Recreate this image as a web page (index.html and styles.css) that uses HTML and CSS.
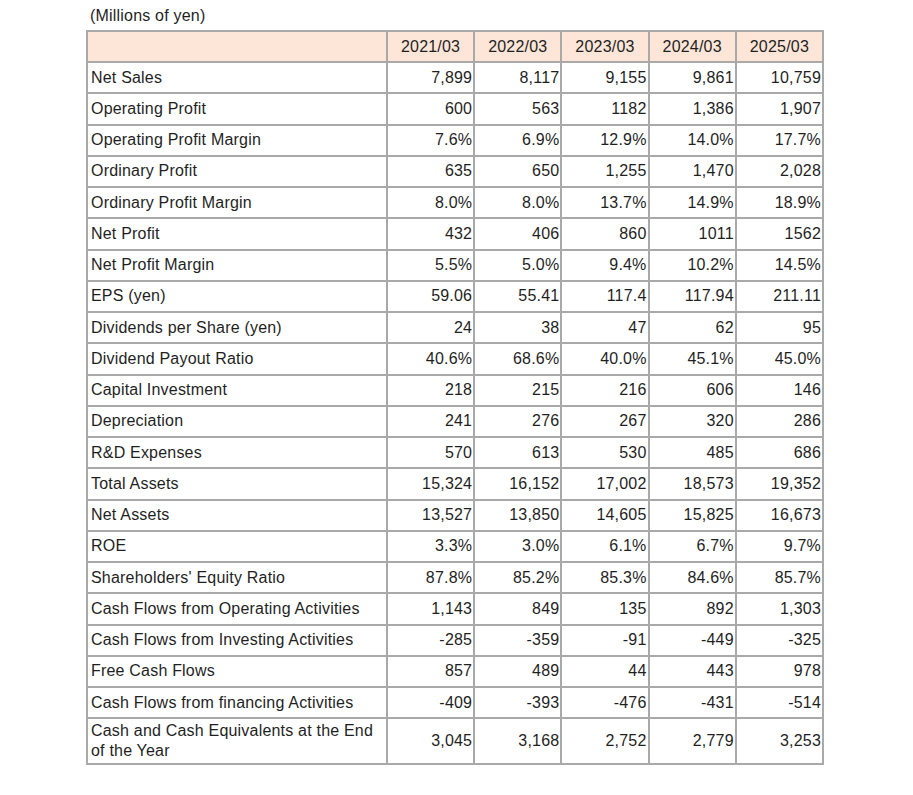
FILE: index.html
```html
<!DOCTYPE html>
<html lang="en">
<head>
<meta charset="utf-8">
<title>Financial Highlights</title>
<link rel="stylesheet" href="styles.css">
</head>
<body>
<div class="wrap">
  <p class="unit">(Millions of yen)</p>
  <table class="fin">
    <colgroup>
      <col class="c-label">
      <col class="c-year"><col class="c-year"><col class="c-year"><col class="c-year"><col class="c-year">
    </colgroup>
    <thead>
      <tr class="head">
        <th></th><th>2021/03</th><th>2022/03</th><th>2023/03</th><th>2024/03</th><th>2025/03</th>
      </tr>
    </thead>
    <tbody>
      <tr><th>Net Sales</th><td>7,899</td><td>8,117</td><td>9,155</td><td>9,861</td><td>10,759</td></tr>
      <tr><th>Operating Profit</th><td>600</td><td>563</td><td>1182</td><td>1,386</td><td>1,907</td></tr>
      <tr><th>Operating Profit Margin</th><td>7.6%</td><td>6.9%</td><td>12.9%</td><td>14.0%</td><td>17.7%</td></tr>
      <tr><th>Ordinary Profit</th><td>635</td><td>650</td><td>1,255</td><td>1,470</td><td>2,028</td></tr>
      <tr><th>Ordinary Profit Margin</th><td>8.0%</td><td>8.0%</td><td>13.7%</td><td>14.9%</td><td>18.9%</td></tr>
      <tr><th>Net Profit</th><td>432</td><td>406</td><td>860</td><td>1011</td><td>1562</td></tr>
      <tr><th>Net Profit Margin</th><td>5.5%</td><td>5.0%</td><td>9.4%</td><td>10.2%</td><td>14.5%</td></tr>
      <tr><th>EPS (yen)</th><td>59.06</td><td>55.41</td><td>117.4</td><td>117.94</td><td>211.11</td></tr>
      <tr><th>Dividends per Share (yen)</th><td>24</td><td>38</td><td>47</td><td>62</td><td>95</td></tr>
      <tr><th>Dividend Payout Ratio</th><td>40.6%</td><td>68.6%</td><td>40.0%</td><td>45.1%</td><td>45.0%</td></tr>
      <tr><th>Capital Investment</th><td>218</td><td>215</td><td>216</td><td>606</td><td>146</td></tr>
      <tr><th>Depreciation</th><td>241</td><td>276</td><td>267</td><td>320</td><td>286</td></tr>
      <tr><th>R&amp;D Expenses</th><td>570</td><td>613</td><td>530</td><td>485</td><td>686</td></tr>
      <tr><th>Total Assets</th><td>15,324</td><td>16,152</td><td>17,002</td><td>18,573</td><td>19,352</td></tr>
      <tr><th>Net Assets</th><td>13,527</td><td>13,850</td><td>14,605</td><td>15,825</td><td>16,673</td></tr>
      <tr><th>ROE</th><td>3.3%</td><td>3.0%</td><td>6.1%</td><td>6.7%</td><td>9.7%</td></tr>
      <tr><th>Shareholders' Equity Ratio</th><td>87.8%</td><td>85.2%</td><td>85.3%</td><td>84.6%</td><td>85.7%</td></tr>
      <tr><th>Cash Flows from Operating Activities</th><td>1,143</td><td>849</td><td>135</td><td>892</td><td>1,303</td></tr>
      <tr><th>Cash Flows from Investing Activities</th><td>-285</td><td>-359</td><td>-91</td><td>-449</td><td>-325</td></tr>
      <tr><th>Free Cash Flows</th><td>857</td><td>489</td><td>44</td><td>443</td><td>978</td></tr>
      <tr><th>Cash Flows from financing Activities</th><td>-409</td><td>-393</td><td>-476</td><td>-431</td><td>-514</td></tr>
      <tr class="tall"><th>Cash and Cash Equivalents at the End of the Year</th><td>3,045</td><td>3,168</td><td>2,752</td><td>2,779</td><td>3,253</td></tr>
    </tbody>
  </table>
</div>
</body>
</html>
```
FILE: styles.css
```css
html, body {
  margin: 0;
  padding: 0;
  background: #ffffff;
}

body {
  font-family: "Liberation Sans", Arial, sans-serif;
  font-size: 16px;
  letter-spacing: 0.2px;
  color: #1f1f1f;
}

.wrap {
  padding: 6px 0 0 86px;
}

.unit {
  margin: 0 0 4px 0;
  padding-left: 4px;
  line-height: 20px;
  font-size: 16px;
}

.fin {
  width: 738px;
  table-layout: fixed;
  border-collapse: separate;
  border-spacing: 0;
  border: 1px solid #a9a9a9;
}

.c-label {
  width: 300px;
}

.fin th,
.fin td {
  border: 1px solid #a9a9a9;
  padding: 2px 1px 2px 3px;
  line-height: 20px;
  font-weight: normal;
  vertical-align: middle;
}

.fin tbody tr {
  height: 31.25px;
}

.fin tbody th {
  text-align: left;
}

.fin tbody td {
  text-align: right;
}

.head {
  height: 31px;
}

.head th {
  background: #fde5d8;
  text-align: center;
  padding: 2px 1px;
}
```
